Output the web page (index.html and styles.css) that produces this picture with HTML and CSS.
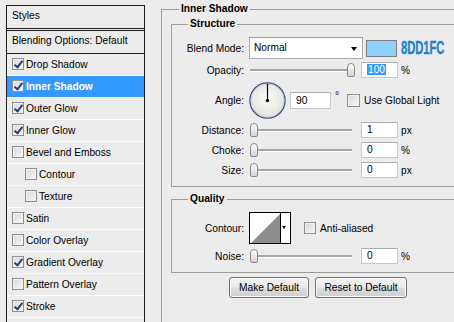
FILE: index.html
```html
<!DOCTYPE html>
<html lang="en">
<head>
    <meta charset="UTF-8">
    <title>Layer Style - Inner Shadow</title>
    <link rel="stylesheet" href="styles.css">
</head>
<body>
    <div class="dialog">
        <!-- Left: list of layer styles -->
        <div class="styles-panel">
            <div class="styles-title">Styles</div>
            <div class="blend-default">Blending Options: Default</div>
            <ul class="style-list">
                <li class="style-item"><span class="check checked"></span>Drop Shadow</li>
                <li class="style-item selected"><span class="check checked"></span>Inner Shadow</li>
                <li class="style-item"><span class="check checked"></span>Outer Glow</li>
                <li class="style-item"><span class="check checked"></span>Inner Glow</li>
                <li class="style-item"><span class="check"></span>Bevel and Emboss</li>
                <li class="style-item sub"><span class="check"></span>Contour</li>
                <li class="style-item sub"><span class="check"></span>Texture</li>
                <li class="style-item"><span class="check"></span>Satin</li>
                <li class="style-item"><span class="check"></span>Color Overlay</li>
                <li class="style-item"><span class="check checked"></span>Gradient Overlay</li>
                <li class="style-item"><span class="check"></span>Pattern Overlay</li>
                <li class="style-item"><span class="check checked"></span>Stroke</li>
                <li class="style-item"></li>
            </ul>
        </div>

        <!-- Right: Inner Shadow options -->
        <div class="options">
            <fieldset class="group outer">
                <legend>Inner Shadow</legend>

                <fieldset class="group structure">
                    <legend>Structure</legend>
                    <div class="rows">
                        <div class="row row-blend">
                            <span class="label">Blend Mode:</span>
                            <span class="select">Normal</span>
                            <span class="swatch"></span>
                            <span class="hex">8DD1FC</span>
                        </div>
                        <div class="row">
                            <span class="label">Opacity:</span>
                            <div class="slider"><span class="thumb" style="left: 97px"></span></div>
                            <span class="field"><span class="selection">100</span></span>
                            <span class="unit">%</span>
                        </div>
                        <div class="row row-angle">
                            <span class="label">Angle:</span>
                            <svg class="dial" width="37" height="37" viewBox="0 0 37 37">
                                <defs>
                                    <radialGradient id="dialFill" cx="50%" cy="45%" r="55%">
                                        <stop offset="0" stop-color="#fbfbf9"/>
                                        <stop offset="1" stop-color="#e2e2dd"/>
                                    </radialGradient>
                                </defs>
                                <circle cx="18.5" cy="18.5" r="17.6" fill="url(#dialFill)" stroke="#45547f" stroke-width="1.3"/>
                                <circle cx="18.5" cy="18.5" r="16.4" fill="none" stroke="#cfd2da" stroke-width="1"/>
                                <line x1="18.5" y1="1.5" x2="18.5" y2="18.5" stroke="#000" stroke-width="1.2"/>
                                <circle cx="18.5" cy="18.5" r="1.7" fill="#000"/>
                            </svg>
                            <span class="field field-angle">90</span>
                            <span class="degree">°</span>
                            <span class="check global"></span>
                            <span class="check-label">Use Global Light</span>
                        </div>
                        <div class="row row-tight">
                            <span class="label">Distance:</span>
                            <div class="slider"><span class="thumb" style="left: 0px"></span></div>
                            <span class="field">1</span>
                            <span class="unit">px</span>
                        </div>
                        <div class="row">
                            <span class="label">Choke:</span>
                            <div class="slider"><span class="thumb" style="left: 0px"></span></div>
                            <span class="field">0</span>
                            <span class="unit">%</span>
                        </div>
                        <div class="row">
                            <span class="label">Size:</span>
                            <div class="slider"><span class="thumb" style="left: 0px"></span></div>
                            <span class="field">0</span>
                            <span class="unit">px</span>
                        </div>
                    </div>
                </fieldset>

                <fieldset class="group quality">
                    <legend>Quality</legend>
                    <div class="rows">
                        <div class="row row-contour">
                            <span class="label">Contour:</span>
                            <span class="contour">
                                <svg class="contour-curve" width="30" height="30" viewBox="0 0 30 30">
                                    <polygon points="1,30 30,1 30,30" fill="#8e8e8e"/>
                                </svg>
                                <span class="contour-arrow"></span>
                            </span>
                            <span class="check anti"></span>
                            <span class="check-label">Anti-aliased</span>
                        </div>
                        <div class="row">
                            <span class="label">Noise:</span>
                            <div class="slider"><span class="thumb" style="left: 0px"></span></div>
                            <span class="field">0</span>
                            <span class="unit">%</span>
                        </div>
                    </div>
                </fieldset>

                <div class="buttons">
                    <button class="btn btn-make">Make Default</button>
                    <button class="btn btn-reset">Reset to Default</button>
                </div>
            </fieldset>
        </div>
    </div>
</body>
</html>
```

FILE: styles.css
```css
* {
    margin: 0;
    padding: 0;
    box-sizing: border-box;
}

body {
    background: #ececec;
    color: #000;
    font-family: 'Liberation Sans', Arial, sans-serif;
    font-size: 10.2px;
    overflow: hidden;
}

.dialog {
    display: flex;
    align-items: flex-start;
    height: 322px;
}

/* ---------- styles list ---------- */

.styles-panel {
    flex: none;
    width: 139px;
    height: 340px;
    margin: 5px 0 0 6px;
    border: 1px solid #1e1e1e;
}

.styles-title {
    height: 25px;
    line-height: 20px;
    padding-left: 5px;
    border-bottom: 3px double #1e1e1e;
}

.blend-default {
    height: 23px;
    line-height: 20px;
    padding-left: 5px;
    border-bottom: 1px solid #1e1e1e;
}

.style-list {
    list-style: none;
}

.style-item {
    display: flex;
    align-items: center;
    height: 22px;
    padding: 0 0 1px 5px;
    border-bottom: 1px solid #fbfbfb;
}

.style-item.sub {
    padding-left: 18px;
}

.style-item.selected {
    background: #3399ff;
    color: #fff;
    font-weight: bold;
}

.check {
    position: relative;
    flex: none;
    width: 12px;
    height: 12px;
    margin-right: 2px;
    border: 1px solid #8e8f8f;
    background: linear-gradient(135deg, #d9d9d9 0%, #f6f6f6 100%);
    box-shadow: inset 0 0 0 1px #f2f2f2;
}

.check.checked::after {
    content: '';
    position: absolute;
    left: 3px;
    top: 0;
    width: 3px;
    height: 7px;
    border: solid #2b3d7a;
    border-width: 0 2px 2px 0;
    transform: rotate(38deg);
}

/* ---------- options ---------- */

.options {
    flex: none;
    width: 320px;
    margin: 3px 0 0 16px;
}

.group {
    min-width: 0;
    border: 1px solid #9d9d9d;
}

.group legend {
    line-height: 12px;
    font-weight: bold;
    padding: 0 2px;
}

.outer {
    height: 340px;
    padding: 0;
}

.outer > legend {
    margin-left: 17px;
}

.structure,
.quality {
    margin-left: 9px;
    padding: 0;
}

.structure {
    margin-top: 3px;
}

.quality {
    margin-top: 6px;
}

.structure > legend,
.quality > legend {
    margin-left: 16px;
}

.rows {
    padding: 7px 0 8px;
}

.row {
    display: flex;
    align-items: center;
    height: 16px;
    margin-top: 4px;
}

.row:first-child {
    margin-top: 0;
}

.row-blend {
    height: 22px;
}

.row-blend + .row,
.row-tight {
    margin-top: 3px;
}

.row-angle {
    height: 37px;
}

.row-contour {
    height: 32px;
}

.label {
    flex: none;
    width: 72px;
    margin-right: 5px;
    text-align: right;
}

.select {
    position: relative;
    width: 114px;
    height: 22px;
    line-height: 20px;
    padding-left: 4px;
    background: #fff;
    border: 1px solid #abadb3;
    border-top-color: #9c9fa6;
}

.select::after {
    content: '';
    position: absolute;
    right: 5px;
    top: 9px;
    border-style: solid;
    border-width: 4px 3.5px 0;
    border-color: #000 transparent transparent;
}

.swatch {
    width: 31px;
    height: 17px;
    margin-left: 3px;
    background: #8dd1fc;
    border: 1px solid #7f7f7f;
}

.hex {
    display: inline-block;
    margin-left: 4px;
    color: #1d80cf;
    font-size: 18px;
    font-weight: bold;
    -webkit-text-stroke: 0.4px #1d80cf;
    transform: scaleX(0.62);
    transform-origin: left center;
}

.slider {
    position: relative;
    flex: none;
    width: 105px;
    height: 16px;
    margin: 0 6px 0 1px;
}

.slider::before {
    content: '';
    position: absolute;
    left: 0;
    right: 3px;
    top: 7px;
    height: 2px;
    background: #a6a6a6;
    border-bottom: 1px solid #fdfdfd;
}

.thumb {
    position: absolute;
    top: 1px;
    width: 8px;
    height: 14px;
    border: 1px solid #8a8a8a;
    border-radius: 4px 4px 2px 2px;
    background: linear-gradient(#fdfdfd, #d4d4d4);
}

.field {
    flex: none;
    width: 37px;
    height: 16px;
    line-height: 14px;
    padding-left: 5px;
    background: #fff;
    border: 1px solid #c5c8cf;
    border-top-color: #a9acb3;
}

.selection {
    background: #3399ff;
    color: #fff;
    padding: 0 1px;
}

.unit {
    margin-left: 3px;
}

.dial {
    flex: none;
}

.field-angle {
    width: 41px;
    height: 17px;
    line-height: 15px;
    margin-left: 4px;
}

.degree {
    align-self: flex-start;
    margin: 8px 0 0 4px;
}

.check.global {
    margin-left: 8px;
    width: 13px;
    height: 13px;
}

.check-label {
    margin-left: 2px;
}

.contour {
    display: flex;
    flex: none;
    width: 42px;
    height: 32px;
    background: #fff;
    border: 1px solid #000;
}

.contour-curve {
    display: block;
}

.contour-arrow {
    position: relative;
    width: 10px;
    border-left: 1px solid #000;
}

.contour-arrow::after {
    content: '';
    position: absolute;
    left: 1px;
    top: 13px;
    border-style: solid;
    border-width: 3px 2.5px 0;
    border-color: #000 transparent transparent;
}

.check.anti {
    margin-left: 13px;
}

.buttons {
    display: flex;
    gap: 6px;
    margin: 4px 0 0 67px;
}

.btn {
    height: 21px;
    font: inherit;
    color: #000;
    border: 1px solid #707070;
    border-radius: 3px;
    background: linear-gradient(#f2f2f2 0%, #ebebeb 48%, #dddddd 52%, #cfcfcf 100%);
    box-shadow: inset 0 0 0 1px #fbfbfb;
}

.btn-make {
    width: 80px;
}

.btn-reset {
    width: 92px;
}
```
